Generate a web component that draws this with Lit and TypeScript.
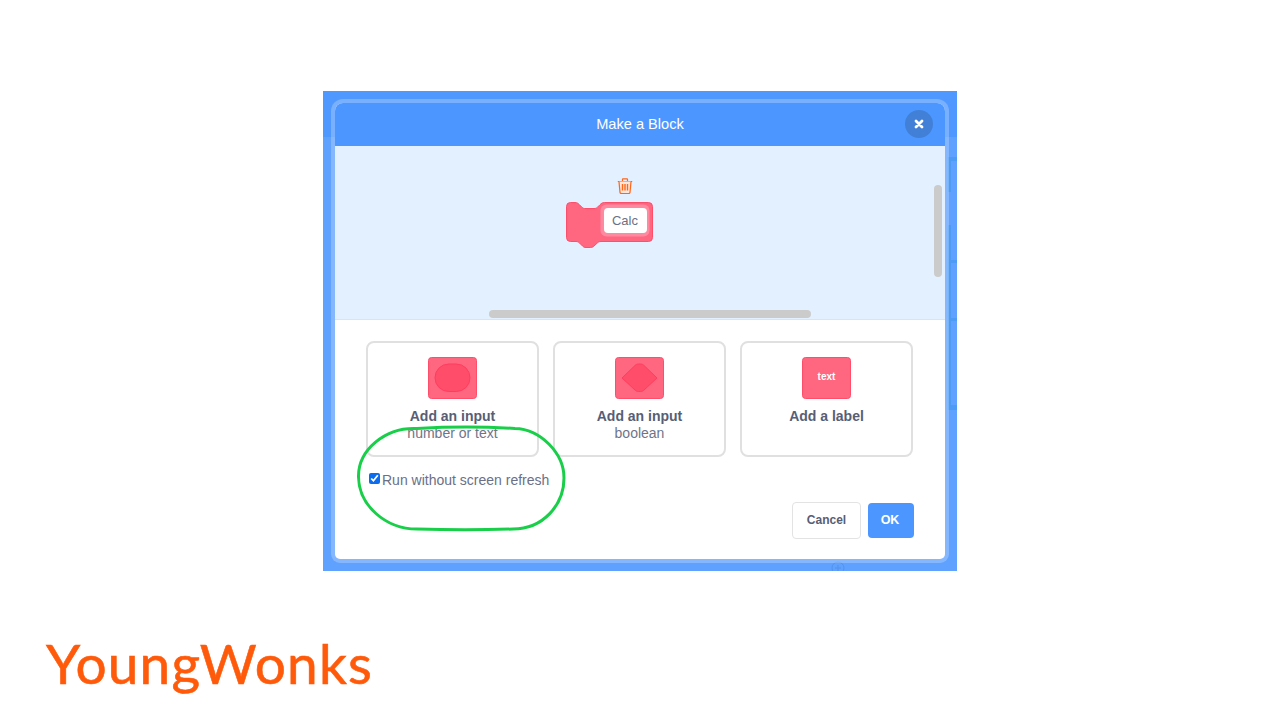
import { LitElement, html, css } from "lit";
import { customElement } from "lit/decorators.js";

@customElement("app-root")
export class AppRoot extends LitElement {
  static styles = css`
    :host { display: block; width: 1280px; height: 720px; background: #fff; overflow: hidden; font-family: "Liberation Sans", Arial, sans-serif; color: #575e75; }
    .page { display: flex; flex-direction: column; height: 720px; padding: 91px 0 0 46px; box-sizing: border-box; }
    .frame { position: relative; overflow: hidden; flex: none; margin-left: 277px; width: 634px; height: 480px; padding: 12px; box-sizing: border-box; background: linear-gradient(#4f98ff 0, #4f98ff 46px, #5fa1ff 46px); }
    .rib { position: absolute; background: #4d9bf5; }
    .rib.c1 { left: 625px; width: 3px; top: 66px; height: 35px; }
    .rib.c2 { left: 625px; width: 3px; top: 134px; height: 185px; }
    .rib.t1 { left: 626px; width: 8px; top: 66px; height: 4px; }
    .rib.t2 { left: 626px; width: 8px; top: 169px; height: 3px; }
    .rib.t3 { left: 626px; width: 8px; top: 227px; height: 3px; }
    .rib.t4 { left: 626px; width: 8px; top: 314px; height: 5px; }
    .zoomctl { position: absolute; left: 508px; top: 470px; opacity: .35; }
    .modal { position: relative; display: flex; flex-direction: column; height: 456px; background: #fff; border-radius: 8px 8px 5px 5px; box-shadow: 0 0 0 4px rgba(255,255,255,.24); }
    .head { position: relative; flex: none; height: 43px; padding-bottom: 2px; box-sizing: border-box; display: flex; align-items: center; justify-content: center; background: #4c97ff; color: #fff; font-size: 14.6px; border-radius: 8px 8px 0 0; }
    .close { position: absolute; right: 12px; top: 7px; width: 28px; height: 28px; border-radius: 50%; background: #4280d7; display: flex; align-items: center; justify-content: center; }
    .preview { position: relative; flex: none; height: 141px; background: #e3f0ff; border-bottom: 1px solid #dde3ec; display: flex; flex-direction: column; align-items: center; padding-top: 32px; }
    .trash { margin-left: -30px; display: block; flex: none; }
    .block { position: relative; flex: none; margin: 8px 0 0 -61px; width: 88px; height: 46px; }
    .block svg { display: block; }
    .field { position: absolute; left: 38px; top: 6px; width: 43px; height: 25px; box-sizing: border-box; background: #fff; border-radius: 4px; display: flex; align-items: center; justify-content: center; font-size: 13px; color: #6b7185; }
    .sb-h { position: absolute; left: 154px; top: 164px; width: 322px; height: 8px; border-radius: 4px; background: #cbcbcb; }
    .sb-v { position: absolute; right: 3px; top: 39px; width: 8px; height: 92px; border-radius: 4px; background: #cbcbcb; }
    .cards { display: grid; grid-template-columns: repeat(3, 173px); gap: 14px; padding: 21px 0 0 31px; }
    .card { height: 116px; box-sizing: border-box; border: 2px solid #e0e0e0; border-radius: 8px; display: flex; flex-direction: column; align-items: center; padding-top: 14px; }
    .icon { flex: none; width: 49px; height: 42px; display: block; margin-bottom: 9px; }
    .title { font-size: 14px; font-weight: 700; line-height: 16px; color: #575e75; }
    .sub { font-size: 14px; line-height: 16px; margin-top: 1px; color: #6f7489; }
    .check { display: flex; align-items: center; padding: 14px 0 0 34px; height: 18px; font-size: 14px; color: #6a7086; }
    .check input { width: 11px; height: 11px; margin: -3px 2px 0 0; accent-color: #0b6cf0; }
    .actions { display: flex; justify-content: flex-end; align-items: center; gap: 7px; padding: 13px 31px 0 0; }
    button { font-family: inherit; font-weight: 700; border-radius: 4px; box-sizing: border-box; padding: 0 0 2px; }
    .cancel { width: 69px; height: 37px; background: #fff; border: 1px solid #e3e3e3; color: #575e75; font-size: 12px; }
    .ok { width: 46px; height: 35px; background: #4c97ff; border: none; color: #fff; font-size: 12.5px; padding-right: 2px; }
    .ring { position: absolute; left: 20px; top: 322px; width: 212px; height: 107px; overflow: visible; pointer-events: none; }
    .logo { margin-top: 59px; font-family: "Lato", sans-serif; font-size: 55px; line-height: 66px; color: #ff5a0a; letter-spacing: 1.15px; -webkit-text-stroke: .6px #ff5a0a; white-space: nowrap; }
  `;

  render() {
    return html`<div class="page">
      <div class="frame">
        <div class="rib c1"></div><div class="rib c2"></div>
        <div class="rib t1"></div><div class="rib t2"></div><div class="rib t3"></div><div class="rib t4"></div>
        <svg class="zoomctl" width="14" height="14" viewBox="0 0 14 14" fill="none" stroke="#3f78cf"><circle cx="7" cy="7" r="6"/><path d="M7 4v6M4 7h6"/></svg>
        <div class="modal">
          <div class="head">Make a Block
            <div class="close"><svg width="10" height="10" viewBox="0 0 10 10"><path d="M2 2l6 6M8 2l-6 6" stroke="#fff" stroke-width="2.800" stroke-linecap="round"/></svg></div>
          </div>
          <div class="preview">
            <svg class="trash" width="16" height="16" viewBox="0 0 16 16" fill="none" stroke="#ff661a" stroke-width="1.200" stroke-linejoin="round">
              <path d="M.8 3.500h14.400M5.500 3.300V1.300c0-.3.2-.5.500-.5h4c.3 0 .5.200.5.500v2" />
              <path d="M2 3.600l1 10.800c.1.700.6 1.100 1.300 1.100h7.400c.7 0 1.200-.4 1.300-1.100l1-10.800" fill="#ffe6d8"/>
              <path d="M5.500 6v6.500M8 6v6.500M10.500 6v6.500" stroke-width="1.400"/>
            </svg>
            <div class="block">
              <svg width="88" height="46" viewBox="0 0 88 46">
                <path d="M.5 4.500a4 4 0 0 1 4-4h4.500c2 0 3 .8 4 1.800l3 3c1 1 2 1.200 3 1.200h9c1.500 0 2.500-.3 3.500-1.300l2.500-2.500c1.200-1.200 2.400-2.200 4.500-2.200h44a4 4 0 0 1 4 4v31a4 4 0 0 1-4 4H35c-1.500 0-2.500.3-3.500 1.300L28 44c-1 1-2 1.500-3.500 1.500H20c-1.500 0-2.500-.5-3.500-1.500l-3-3c-1-1-2-1.500-3.500-1.500H4.500a4 4 0 0 1-4-4z" fill="#ff6680" stroke="#ff4d6a"/>
                <rect x="34.500" y="2.500" width="49" height="32" rx="6" fill="#ff8aa0"/>
              </svg>
              <div class="field">Calc</div>
            </div>
            <div class="sb-h"></div>
            <div class="sb-v"></div>
          </div>
          <div class="cards">
            <div class="card">
              <svg class="icon" viewBox="0 0 49 42"><rect x=".5" y=".5" width="48" height="41" rx="3" fill="#ff6680" stroke="#ff4d6a"/><rect x="7" y="7" width="35" height="27.500" rx="13.750" fill="#ff4d6a" stroke="#ff3d5e"/></svg>
              <div class="title">Add an input</div>
              <div class="sub">number or text</div>
            </div>
            <div class="card">
              <svg class="icon" viewBox="0 0 49 42"><rect x=".5" y=".5" width="48" height="41" rx="3" fill="#ff6680" stroke="#ff4d6a"/><path d="M7 21L20 8.500c1-1 2-1.500 3.500-1.500h2c1.500 0 2.500.5 3.500 1.500L42 21 29 33c-1 1-2 1.500-3.500 1.500h-2c-1.500 0-2.500-.5-3.500-1.500z" fill="#ff4d6a" stroke="#ff3d5e" stroke-linejoin="round"/></svg>
              <div class="title">Add an input</div>
              <div class="sub">boolean</div>
            </div>
            <div class="card">
              <svg class="icon" viewBox="0 0 49 42"><rect x=".5" y=".5" width="48" height="41" rx="3" fill="#ff6680" stroke="#ff4d6a"/><text x="24.500" y="23" text-anchor="middle" font-family="Liberation Sans" font-weight="700" font-size="10" fill="#fff">text</text></svg>
              <div class="title">Add a label</div>
            </div>
          </div>
          <label class="check"><input type="checkbox" checked />Run without screen refresh</label>
          <div class="actions">
            <button class="cancel">Cancel</button>
            <button class="ok">OK</button>
          </div>
          <svg class="ring" viewBox="0 0 212 107" fill="none"><path d="M62 3.500C30 2 3 25 3.500 52 4 80 30 104 62 104c30 .8 66 .8 96 0 30 0 51-24 51-51 0-25-24-49-49-49.500C128 1.500 96 1.500 62 3.500z" stroke="#19cf49" stroke-width="3"/></svg>
        </div>
      </div>
      <div class="logo">YoungWonks</div>
    </div>`;
  }
}
